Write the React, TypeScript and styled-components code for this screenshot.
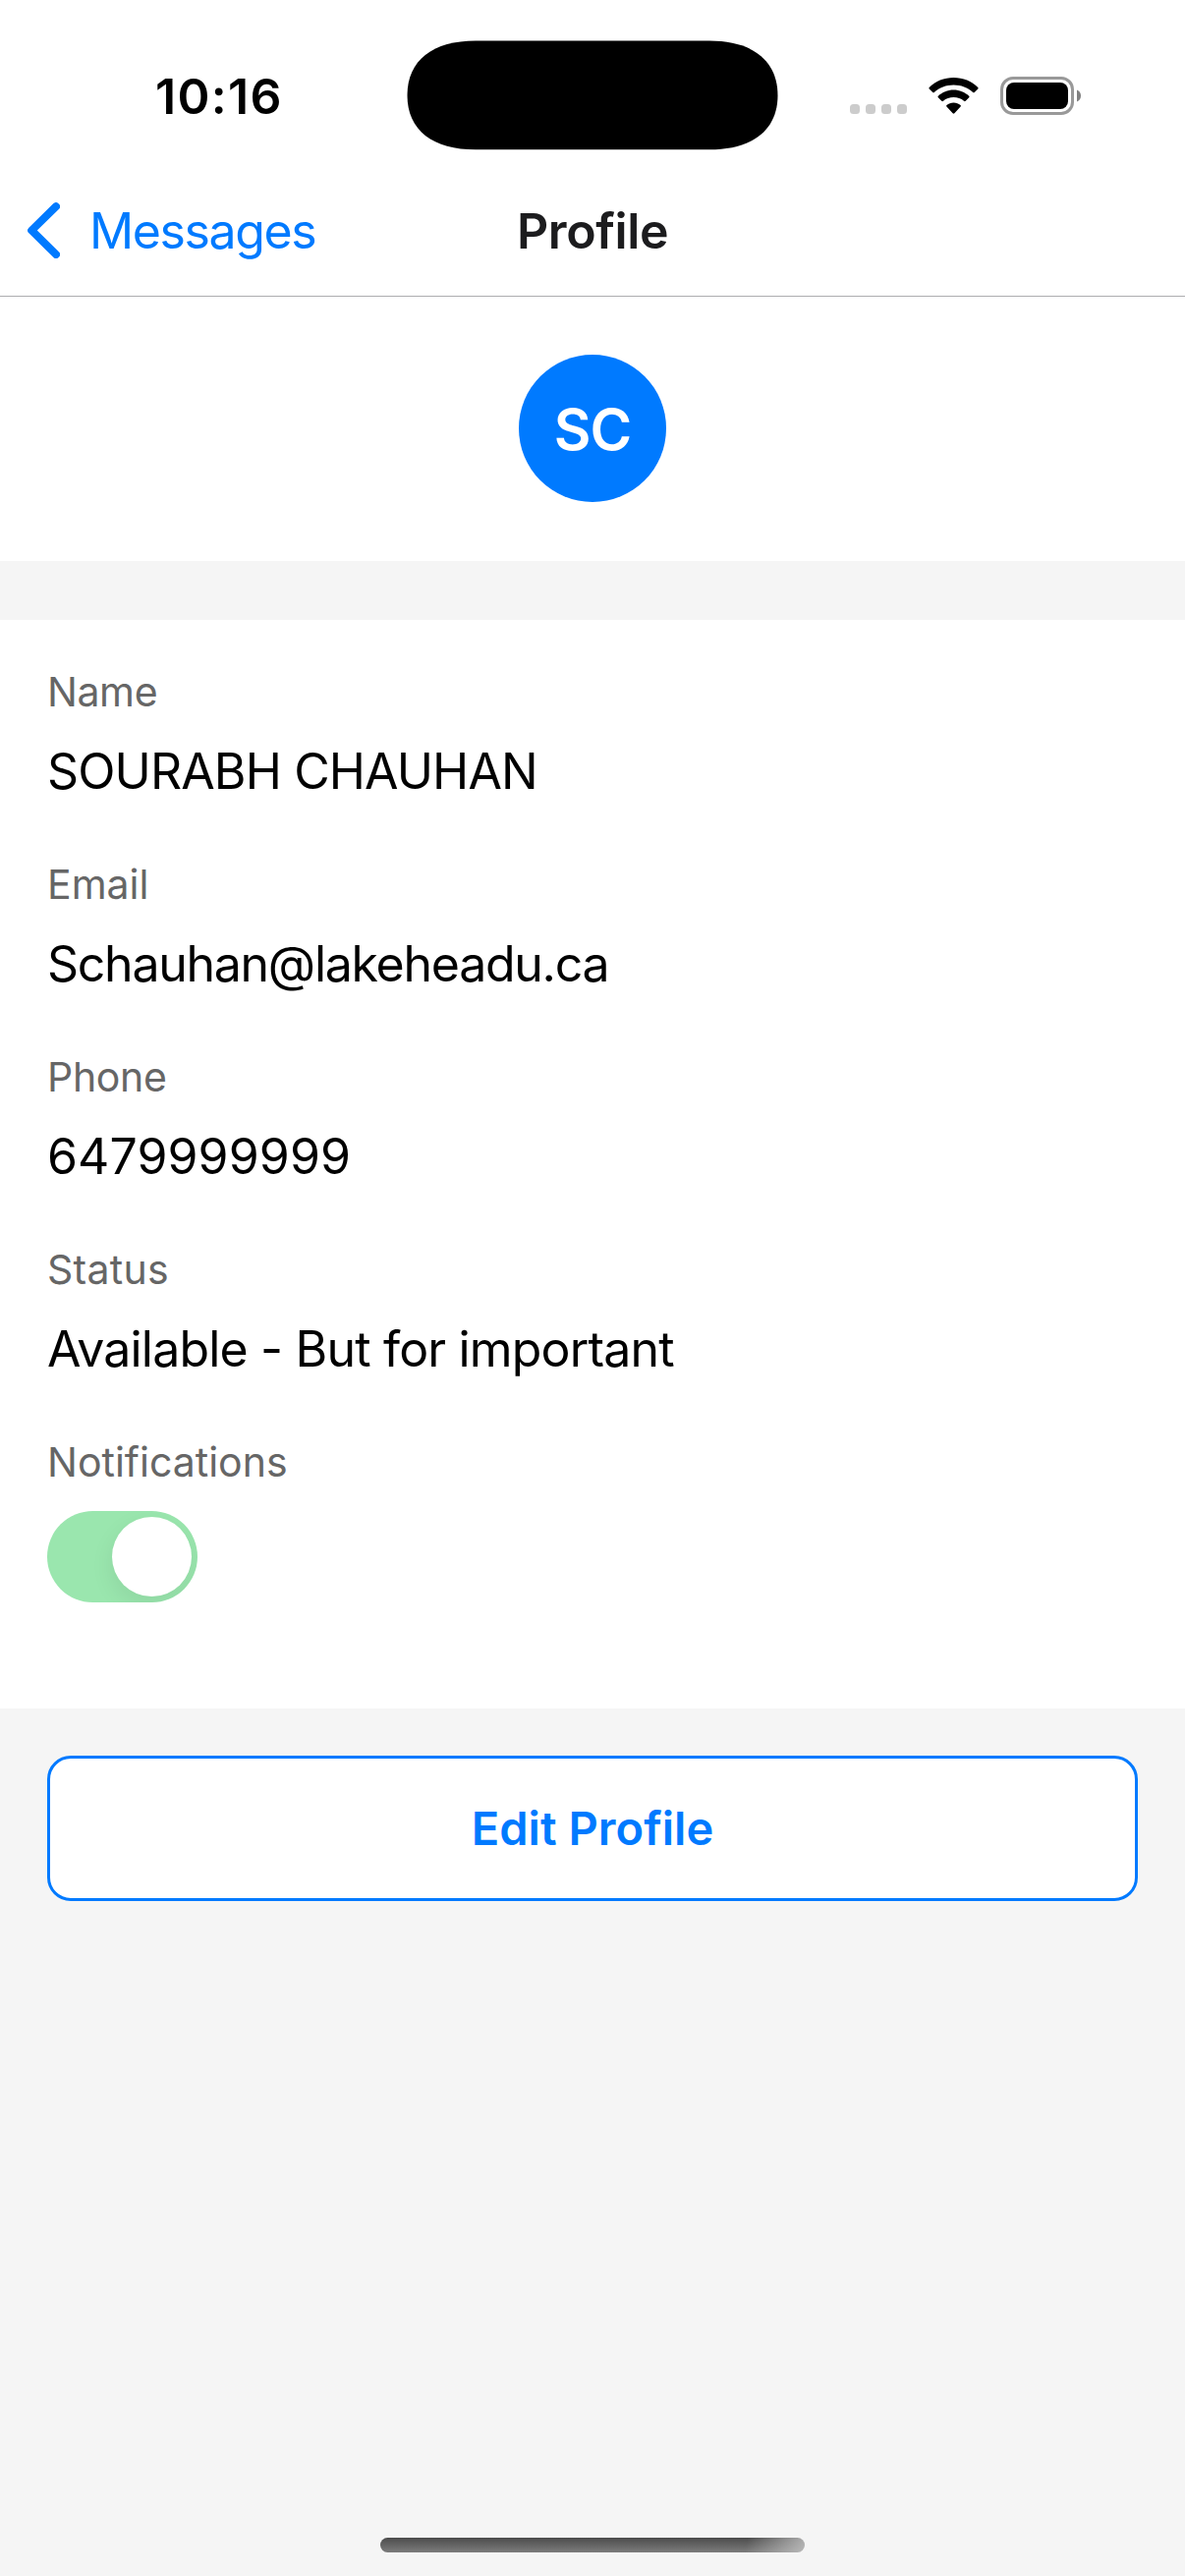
import React from "react";
import styled, { createGlobalStyle } from "styled-components";

const GlobalStyle = createGlobalStyle`
  * { box-sizing: border-box; }
  body {
    margin: 0;
    background: #f5f5f5;
    font-family: Inter, "Liberation Sans", sans-serif;
    font-kerning: normal;
  }
`;

const Screen = styled.div`
  display: flex;
  flex-direction: column;
  width: 1206px;
  height: 2622px;
  overflow: hidden;
  background: #f5f5f5;
`;

const StatusBar = styled.div`
  display: grid;
  grid-template-columns: 414px 378px 414px;
  height: 177px;
  padding-top: 41px;
  background: #fff;
`;

const Time = styled.div`
  padding-left: 158px;
  padding-top: 26px;
  font-size: 50px;
  line-height: 62px;
  font-weight: 600;
  letter-spacing: 1.3px;
  color: #000;
`;

const Indicators = styled.div`
  display: flex;
  align-items: flex-start;
  padding-left: 73px;
  padding-top: 37px;
`;

const SignalDots = styled.div`
  display: flex;
  gap: 6px;
  padding-top: 28px;
  margin-right: 22px;
`;

const Dot = styled.span`
  width: 10px;
  height: 10px;
  border-radius: 3.5px;
  background: #ccc;
`;

const WifiIcon = styled.svg`
  display: block;
  margin-right: 22px;
`;

const Header = styled.header`
  display: grid;
  grid-template-columns: 1fr auto 1fr;
  align-items: start;
  height: 125px;
  padding-top: 27px;
  background: #fff;
  border-bottom: 1px solid #adadaf;
`;

const BackButton = styled.button`
  display: flex;
  align-items: flex-start;
  padding: 0 0 0 28px;
  border: 0;
  background: none;
  color: #007aff;
  font: inherit;
`;

const Chevron = styled.svg`
  display: block;
  margin-top: 2px;
  margin-right: 30px;
`;

const BackLabel = styled.span`
  font-size: 50px;
  line-height: 62px;
  letter-spacing: -1.4px;
`;

const Title = styled.h1`
  margin: 0;
  font-size: 50px;
  line-height: 62px;
  font-weight: 600;
  letter-spacing: -0.4px;
  color: #1c1c1e;
`;

const AvatarSection = styled.section`
  display: flex;
  justify-content: center;
  padding: 59px 0 60px;
  margin-bottom: 60px;
  background: #fff;
`;

const Avatar = styled.div`
  display: flex;
  align-items: center;
  justify-content: center;
  width: 150px;
  height: 150px;
  padding-top: 1px;
  border-radius: 50%;
  background: #007aff;
  color: #fff;
  font-size: 58px;
  font-weight: 600;
  letter-spacing: -1px;
`;

const Details = styled.section`
  display: flex;
  flex-direction: column;
  height: 1108px;
  padding: 48px 48px 0;
  background: #fff;
`;

const Field = styled.div`
  height: 196px;
`;

const Label = styled.div<{ $track: number }>`
  font-size: 41px;
  line-height: 51px;
  letter-spacing: ${(p) => p.$track}px;
  color: #666;
`;

const Value = styled.div<{ $track: number }>`
  margin-top: 24px;
  font-size: 50px;
  line-height: 62px;
  letter-spacing: ${(p) => p.$track}px;
  white-space: nowrap;
  color: #000;
`;

const Toggle = styled.div`
  display: flex;
  justify-content: flex-end;
  width: 153px;
  height: 93px;
  margin-top: 24px;
  padding: 6px;
  border-radius: 47px;
  background: #9ae6ae;
  overflow: hidden;
`;

const Knob = styled.span`
  width: 81px;
  height: 81px;
  border-radius: 50%;
  background: #fff;
  box-shadow: 0 9px 24px rgba(0, 0, 0, 0.075);
`;

const Actions = styled.div`
  padding: 48px;
`;

const EditButton = styled.button`
  display: flex;
  align-items: center;
  justify-content: center;
  width: 100%;
  height: 148px;
  padding: 0;
  border: 3px solid #007aff;
  border-radius: 24px;
  background: #fff;
  color: #007aff;
  font: 600 47px/58px Inter, "Liberation Sans", sans-serif;
  letter-spacing: 0.05px;
`;

const HomeIndicator = styled.div`
  width: 432px;
  height: 15px;
  margin: auto auto 24px;
  border-radius: 8px;
  background: linear-gradient(100deg, rgba(245, 245, 245, 0) 86%, rgba(200, 200, 200, 0.8) 100%),
    linear-gradient(#4c4c4c, #7c7c7c);
`;

const fields = [
  { label: "Name", labelTrack: -0.4, value: "SOURABH CHAUHAN", valueTrack: -0.87 },
  { label: "Email", labelTrack: 0, value: "Schauhan@lakeheadu.ca", valueTrack: -1.27 },
  { label: "Phone", labelTrack: -0.3, value: "6479999999", valueTrack: 0.1 },
  { label: "Status", labelTrack: 0.3, value: "Available - But for important", valueTrack: -0.82 },
];

export default function App() {
  return (
    <>
      <GlobalStyle />
      <Screen>
        <StatusBar>
          <Time>10:16</Time>
          <svg width="378" height="112" viewBox="0 0 378 112">
            <path d="M.5 56C.5 20 27 .5 70 .5H308C351 .5 377.500 20 377.500 56C377.500 92 351 111.300 308 111.300H70C27 111.300 .5 92 .5 56Z" fill="#000" />
          </svg>
          <Indicators>
            <SignalDots>
              <Dot />
              <Dot />
              <Dot />
              <Dot />
            </SignalDots>
            <WifiIcon width="51" height="39" viewBox="0 0 51 39">
              <path d="M25.500 1C35 1 44 4.600 50.300 10.900Q51 11.700 50.300 12.500L46.700 16Q46 16.600 45.200 16C40 11.300 33 8.600 25.500 8.600S11 11.300 5.800 16Q5 16.600 4.300 16L.7 12.500Q0 11.700 .7 10.900C7 4.600 16 1 25.500 1Z" />
              <path d="M25.500 13.500C31.500 13.500 37 15.900 41.200 19.700Q42 20.500 41.200 21.300L37.700 24.800Q36.900 25.500 36 24.800C33.200 22.400 29.500 21.100 25.500 21.100S17.800 22.400 15 24.800Q14.100 25.500 13.300 24.800L9.800 21.300Q9 20.500 9.800 19.700C14 15.900 19.500 13.500 25.500 13.500Z" />
              <path d="M25.500 26.600C28.200 26.600 30.600 27.500 32.500 29Q33.400 29.800 32.600 30.600L26.400 37.200Q25.500 38.100 24.600 37.200L18.400 30.600Q17.600 29.800 18.500 29C20.400 27.500 22.800 26.600 25.500 26.600Z" />
            </WifiIcon>
            <svg width="83" height="39" viewBox="0 0 83 39">
              <rect x="1.500" y="1.500" width="72" height="36" rx="11.500" fill="none" stroke="#999" strokeWidth="3" />
              <rect x="6" y="6" width="63" height="27" rx="8" fill="#000" />
              <path d="M78 13.500C80.500 14.500 82 16.800 82 19.500S80.500 24.500 78 25.500Z" fill="#808080" />
            </svg>
          </Indicators>
        </StatusBar>
        <Header>
          <BackButton>
            <Chevron width="33" height="57" viewBox="0 0 33 57">
              <path d="M29 4.200L4.200 28.500L29 53" fill="none" stroke="#007aff" strokeWidth="8" strokeLinecap="round" strokeLinejoin="round" />
            </Chevron>
            <BackLabel>Messages</BackLabel>
          </BackButton>
          <Title>Profile</Title>
        </Header>
        <AvatarSection>
          <Avatar>SC</Avatar>
        </AvatarSection>
        <Details>
          {fields.map((f) => (
            <Field key={f.label}>
              <Label $track={f.labelTrack}>{f.label}</Label>
              <Value $track={f.valueTrack}>{f.value}</Value>
            </Field>
          ))}
          <Label $track={0}>Notifications</Label>
          <Toggle>
            <Knob />
          </Toggle>
        </Details>
        <Actions>
          <EditButton>Edit Profile</EditButton>
        </Actions>
        <HomeIndicator />
      </Screen>
    </>
  );
}
